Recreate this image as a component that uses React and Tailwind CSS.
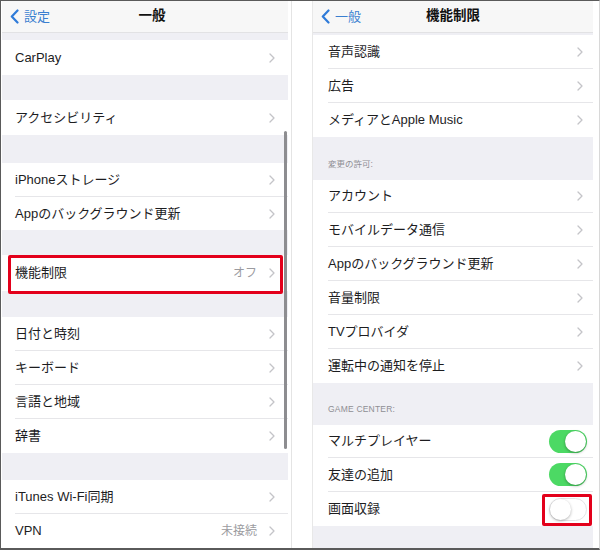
import React from 'react';

const font = { fontFamily: '"Liberation Sans", "Noto Sans CJK JP", sans-serif' };

const Chevron = () => (
  <svg width="6" height="10" viewBox="0 0 6 10" className="shrink-0">
    <polyline points="1,1 5,5 1,9" fill="none" stroke="#c4c4c8" strokeWidth="1.3" strokeLinecap="round" strokeLinejoin="round" />
  </svg>
);

const BackChevron = () => (
  <svg width="9" height="15" viewBox="0 0 9 15" className="shrink-0">
    <polyline points="7.5,1.5 1.8,7.5 7.5,13.5" fill="none" stroke="#2f7bd9" strokeWidth="2.2" strokeLinecap="round" strokeLinejoin="round" />
  </svg>
);

const Toggle = ({ on }) => (
  <div
    className={
      on
        ? 'w-[38px] h-[23px] rounded-full bg-[#4cd964] relative'
        : 'w-[38px] h-[23px] rounded-full bg-white border border-[#e4e4e6] relative'
    }
  >
    <div
      className={
        on
          ? 'absolute top-[1px] right-[1px] w-[21px] h-[21px] rounded-full bg-white shadow-[0_1px_3px_rgba(0,0,0,0.35)]'
          : 'absolute top-0 left-0 w-[21px] h-[21px] rounded-full bg-white shadow-[0_1px_3px_rgba(0,0,0,0.3)]'
      }
    />
  </div>
);

const Row = ({ label, value, h = 'h-[34px]', last, toggle, pad = 'pl-[13px]', padR = 'pr-[13px]', children }) => (
  <div className={`${h} ${pad} bg-white flex relative`}>
    <div className={`flex-1 flex items-center ${padR} ${last ? '' : 'border-b border-[#e6e6e9]'}`}>
      <span className="text-[13px] text-[#1d1d1f] flex-1 whitespace-nowrap">{label}</span>
      {value && <span className="text-[12px] text-[#9b9ba0] mr-[12px]">{value}</span>}
      {toggle !== undefined ? <Toggle on={toggle} /> : <Chevron />}
    </div>
    {children}
  </div>
);

const Gap = ({ h, children }) => (
  <div className={`${h} bg-[#efeff4] flex items-end pl-[15px]`}>{children}</div>
);

const NavBar = ({ back, title, titlePad = '' }) => (
  <div className="h-[32px] bg-[#f7f7f7] border-b border-[#e2e2e4] relative flex items-center justify-center">
    <div className="absolute left-[8px] top-0 h-full flex items-center gap-[5px]">
      <BackChevron />
      <span className="text-[13px] text-[#3a7fd0]">{back}</span>
    </div>
    <span className={`text-[13.5px] font-bold text-[#111] ${titlePad}`}>{title}</span>
  </div>
);

export default function App() {
  return (
    <div
      className="w-[600px] h-[550px] bg-white border-t border-l border-b-2 border-[#5a5a5a] border-r border-r-[#d8d8d8] flex overflow-hidden"
      style={font}
    >
      {/* left screen */}
      <div className="w-[286px] ml-[1px] flex flex-col relative">
        <NavBar back="設定" title="一般" titlePad="pl-[14px]" />
        <Gap h="h-[7px]" />
        <Row label="CarPlay" h="h-[35px]" last />
        <Gap h="h-[25px]" />
        <Row label="アクセシビリティ" h="h-[35px]" last />
        <Gap h="h-[28px]" />
        <Row label="iPhoneストレージ" />
        <Row label="Appのバックグラウンド更新" h="h-[33px]" last />
        <Gap h="h-[25px]" />
        <Row label="機能制限" value="オフ" h="h-[36px]" last>
          <div className="absolute left-[6px] right-[5px] top-0 h-[39px] border-[3px] border-[#e3001b] rounded-[2px] z-10" />
        </Row>
        <Gap h="h-[26px]" />
        <Row label="日付と時刻" />
        <Row label="キーボード" />
        <Row label="言語と地域" />
        <Row label="辞書" last />
        <Gap h="h-[27px]" />
        <Row label="iTunes Wi-Fi同期" />
        <Row label="VPN" value="未接続" last />
        <div className="absolute left-[282px] top-[130px] w-[2.5px] h-[318px] rounded-full bg-[#8d8d90]" />
      </div>

      {/* divider */}
      <div className="w-[21px] ml-[3px] border-l border-[#e4e4e4]" />

      {/* right screen */}
      <div className="w-[281px] flex flex-col border-l border-[#e8e8e8]">
        <NavBar back="一般" title="機能制限" />
        <Gap h="h-[2px]" />
        <Row label="音声認識" pad="pl-[15px]" padR="pr-[10px]" />
        <Row label="広告" pad="pl-[15px]" padR="pr-[10px]" />
        <Row label="メディアとApple Music" pad="pl-[15px]" padR="pr-[10px]" last />
        <Gap h="h-[43px]">
          <span className="text-[8.5px] text-[#8e8e93] mb-[9px]">変更の許可:</span>
        </Gap>
        <Row label="アカウント" pad="pl-[15px]" padR="pr-[10px]" h="h-[33px]" />
        <Row label="モバイルデータ通信" pad="pl-[15px]" padR="pr-[10px]" />
        <Row label="Appのバックグラウンド更新" pad="pl-[15px]" padR="pr-[10px]" />
        <Row label="音量制限" pad="pl-[15px]" padR="pr-[10px]" />
        <Row label="TVプロバイダ" pad="pl-[15px]" padR="pr-[10px]" />
        <Row label="運転中の通知を停止" pad="pl-[15px]" padR="pr-[10px]" last />
        <Gap h="h-[42px]">
          <span className="text-[8.5px] text-[#8e8e93] mb-[9px] tracking-[0.2px]">GAME CENTER:</span>
        </Gap>
        <Row label="マルチプレイヤー" pad="pl-[15px]" padR="pr-[6px]" h="h-[33px]" toggle={true} />
        <Row label="友達の追加" pad="pl-[15px]" padR="pr-[6px]" toggle={true} />
        <Row label="画面収録" pad="pl-[15px]" padR="pr-[6px]" toggle={false} last>
          <div className="absolute right-[1px] top-[2px] w-[50px] h-[32px] border-[3px] border-[#e3001b] rounded-[2px] z-10" />
        </Row>
        <Gap h="flex-1" />
      </div>
    </div>
  );
}
